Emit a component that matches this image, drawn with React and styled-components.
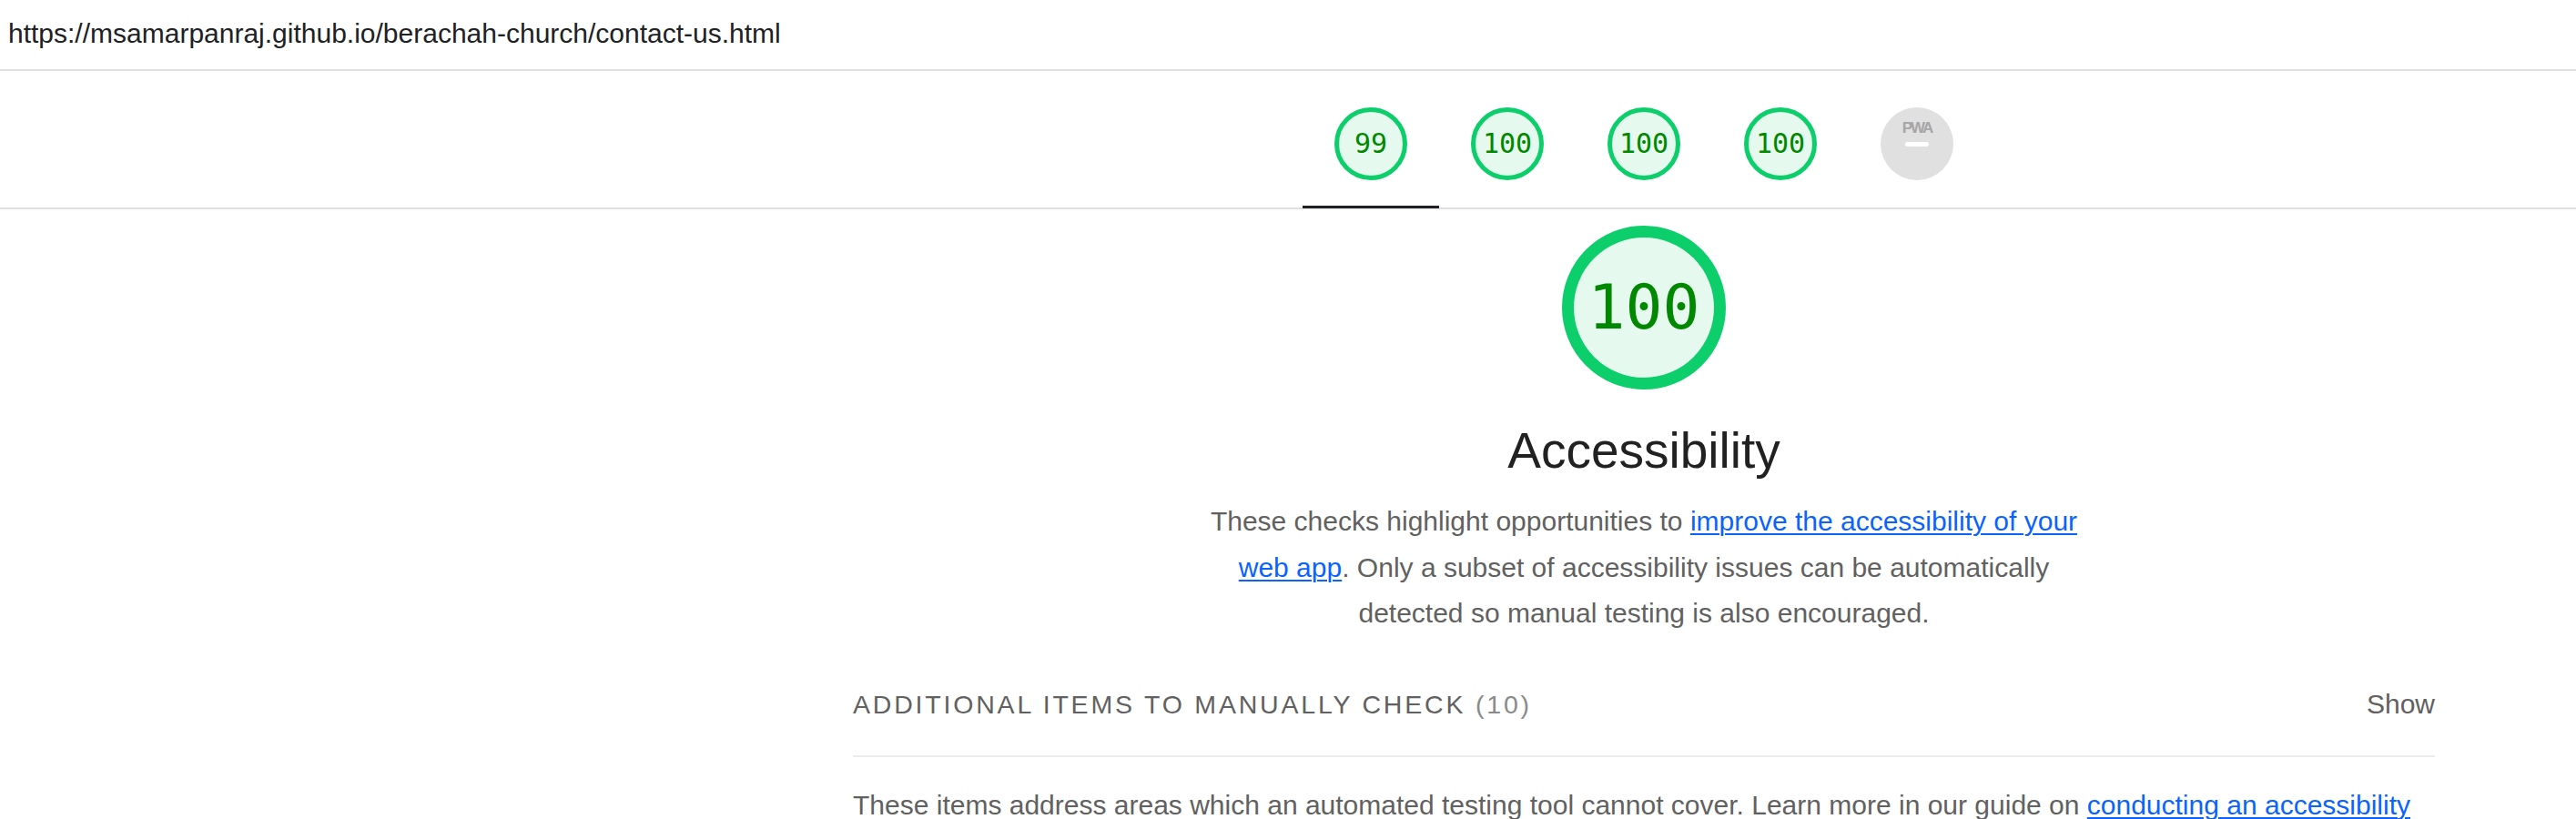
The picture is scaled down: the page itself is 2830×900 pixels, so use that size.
import React from 'react';
import styled, { createGlobalStyle } from 'styled-components';

const GlobalStyle = createGlobalStyle`
  html, body {
    margin: 0;
    padding: 0;
    background: #fff;
    font-family: "Liberation Sans", Arial, sans-serif;
  }
`;

const TopBar = styled.div`
  height: 76px;
  line-height: 74px;
  padding-left: 9px;
  border-bottom: 2px solid #e0e0e0;
  font-size: 30px;
  color: #202124;
  white-space: nowrap;
`;

const ScoreBar = styled.div`
  height: 150px;
  border-bottom: 2px solid #e0e0e0;
`;

const Column = styled.div`
  margin-left: 937px;
  width: 1738px;
`;

const Tabs = styled.div`
  display: flex;
  justify-content: center;
  height: 150px;
`;

const Tab = styled.div`
  width: 150px;
  display: flex;
  justify-content: center;
  padding-top: 40px;
  box-sizing: border-box;
  box-shadow: ${(p) => (p.$active ? 'inset 0 -3px 0 #202124' : 'none')};
  margin-bottom: ${(p) => (p.$active ? '-1px' : '0')};
`;

const Gauge = styled.div`
  width: ${(p) => p.$size}px;
  height: ${(p) => p.$size}px;
  box-sizing: border-box;
  border-radius: 50%;
  border: ${(p) => p.$stroke}px solid #0cce6b;
  background: #e5f9ee;
  display: flex;
  align-items: center;
  justify-content: center;
  font-family: "DejaVu Sans Mono", monospace;
  font-size: ${(p) => p.$font}px;
  color: #008800;
  line-height: 1;
`;

const PwaBadge = styled.div`
  width: 80px;
  height: 80px;
  border-radius: 50%;
  background: #e0e0e0;
  display: flex;
  flex-direction: column;
  align-items: center;
  padding-top: 14px;
  box-sizing: border-box;
  gap: 7px;
`;

const PwaText = styled.span`
  font-family: "Liberation Sans", Arial, sans-serif;
  font-weight: bold;
  font-size: 17px;
  letter-spacing: -2px;
  color: #a6a6a6;
  line-height: 1;
`;

const PwaDash = styled.span`
  width: 26px;
  height: 5px;
  border-radius: 3px;
  background: #fff;
`;

const CategoryHeader = styled.div`
  display: flex;
  flex-direction: column;
  align-items: center;
  padding-top: 18px;
`;

const Title = styled.h2`
  margin: 36px 0 0;
  font-size: 55px;
  font-weight: normal;
  line-height: 63px;
  color: #212121;
`;

const Description = styled.p`
  margin: 21px 0 0;
  font-size: 30px;
  line-height: 50.5px;
  color: #616161;
  text-align: center;
  white-space: nowrap;
`;

const Link = styled.a`
  color: #0a63ff;
  text-decoration: underline;
  text-decoration-thickness: 2px;
  text-underline-offset: 3px;
`;

const GroupHeader = styled.div`
  display: flex;
  justify-content: space-between;
  align-items: center;
  padding: 59px 0 41px;
  border-bottom: 2px solid #ebebeb;
  line-height: 30px;
`;

const GroupTitle = styled.span`
  font-size: 28.5px;
  letter-spacing: 2.8px;
  color: #616161;
`;

const ItemCount = styled.span`
  color: #8a8a8a;
`;

const ShowToggle = styled.span`
  font-size: 30px;
  color: #616161;
`;

const GroupDescription = styled.p`
  margin: 28px 0 0;
  font-size: 30px;
  line-height: 50.5px;
  color: #616161;
`;

const scores = [99, 100, 100, 100];

export default function App() {
  return (
    <>
      <GlobalStyle />
      <TopBar>https://msamarpanraj.github.io/berachah-church/contact-us.html</TopBar>
      <ScoreBar>
        <Column>
          <Tabs>
            {scores.map((s, i) => (
              <Tab key={i} $active={i === 0}>
                <Gauge $size={80} $stroke={5} $font={30}>
                  {s}
                </Gauge>
              </Tab>
            ))}
            <Tab>
              <PwaBadge>
                <PwaText>PWA</PwaText>
                <PwaDash />
              </PwaBadge>
            </Tab>
          </Tabs>
        </Column>
      </ScoreBar>
      <Column>
        <CategoryHeader>
          <Gauge $size={180} $stroke={13} $font={68}>
            100
          </Gauge>
          <Title>Accessibility</Title>
          <Description>
            These checks highlight opportunities to{' '}
            <Link href="#">improve the accessibility of your</Link>
            <br />
            <Link href="#">web app</Link>. Only a subset of accessibility issues can be automatically
            <br />
            detected so manual testing is also encouraged.
          </Description>
        </CategoryHeader>
        <GroupHeader>
          <GroupTitle>
            ADDITIONAL ITEMS TO MANUALLY CHECK <ItemCount>(10)</ItemCount>
          </GroupTitle>
          <ShowToggle>Show</ShowToggle>
        </GroupHeader>
        <GroupDescription>
          These items address areas which an automated testing tool cannot cover. Learn more in our
          guide on <Link href="#">conducting an accessibility review</Link>.
        </GroupDescription>
      </Column>
    </>
  );
}
